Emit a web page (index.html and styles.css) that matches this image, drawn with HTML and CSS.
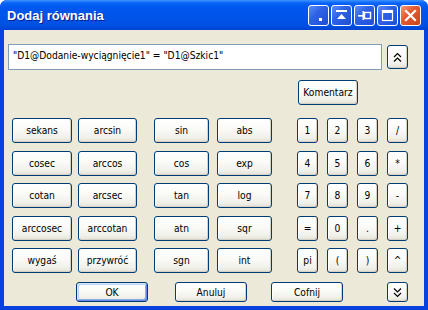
FILE: index.html
```html
<!DOCTYPE html>
<html>
<head>
<meta charset="utf-8">
<link rel="stylesheet" href="styles.css">
</head>
<body>
<div class="window">
  <div class="titlebar">
    <span class="title">Dodaj równania</span>
    <div class="tbtns">
      <div class="tbtn"><svg width="19" height="19" viewBox="0 0 19 19"><rect x="10" y="12" width="3" height="3" fill="#fff"/></svg></div>
      <div class="tbtn"><svg width="19" height="19" viewBox="0 0 19 19"><rect x="4" y="4" width="11" height="2" fill="#fff"/><polygon points="9.5,8 5,13 14,13" fill="#fff"/></svg></div>
      <div class="tbtn"><svg width="19" height="19" viewBox="0 0 19 19"><rect x="3" y="9" width="5" height="1.6" fill="#fff"/><rect x="7.5" y="5" width="1.6" height="9" fill="#fff"/><rect x="9.5" y="6.5" width="6" height="6" fill="none" stroke="#fff" stroke-width="1.4"/></svg></div>
      <div class="tbtn"><svg width="19" height="19" viewBox="0 0 19 19"><rect x="4.5" y="4.5" width="10" height="10" fill="none" stroke="#fff" stroke-width="1.2"/><rect x="4" y="4" width="11" height="3" fill="#fff"/></svg></div>
      <div class="tbtn close"><svg width="19" height="19" viewBox="0 0 19 19"><path d="M5 5 L14 14 M14 5 L5 14" stroke="#fff" stroke-width="2.2" stroke-linecap="square"/></svg></div>
    </div>
  </div>
  <div class="client">
    <div class="exprrow">
      <div class="expr">"D1@Dodanie-wyciągnięcie1" = "D1@Szkic1"</div>
      <button class="btn sq chev"><svg width="9" height="11" viewBox="0 0 9 11"><path d="M1 5 L4.5 1.5 L8 5 M1 9.5 L4.5 6 L8 9.5" fill="none" stroke="#000" stroke-width="1.2"/></svg></button>
    </div>
    <div class="komrow">
      <button class="btn kom">Komentarz</button>
    </div>
    <div class="pad">
      <div class="grp g1">
        <button class="btn">sekans</button><button class="btn">arcsin</button>
        <button class="btn">cosec</button><button class="btn">arccos</button>
        <button class="btn">cotan</button><button class="btn">arcsec</button>
        <button class="btn">arccosec</button><button class="btn">arccotan</button>
        <button class="btn">wygaś</button><button class="btn">przywróć</button>
      </div>
      <div class="grp g2">
        <button class="btn">sin</button><button class="btn">abs</button>
        <button class="btn">cos</button><button class="btn">exp</button>
        <button class="btn">tan</button><button class="btn">log</button>
        <button class="btn">atn</button><button class="btn">sqr</button>
        <button class="btn">sgn</button><button class="btn">int</button>
      </div>
      <div class="grp g3">
        <button class="btn">1</button><button class="btn">2</button><button class="btn">3</button><button class="btn">/</button>
        <button class="btn">4</button><button class="btn">5</button><button class="btn">6</button><button class="btn">*</button>
        <button class="btn">7</button><button class="btn">8</button><button class="btn">9</button><button class="btn">-</button>
        <button class="btn">=</button><button class="btn">0</button><button class="btn">.</button><button class="btn">+</button>
        <button class="btn">pi</button><button class="btn">(</button><button class="btn">)</button><button class="btn">^</button>
      </div>
    </div>
    <div class="actions">
      <button class="btn act def">OK</button>
      <button class="btn act">Anuluj</button>
      <button class="btn act">Cofnij</button>
      <button class="btn sq chev down"><svg width="9" height="11" viewBox="0 0 9 11"><path d="M1 1.5 L4.5 5 L8 1.5 M1 6 L4.5 9.5 L8 6" fill="none" stroke="#000" stroke-width="1.2"/></svg></button>
    </div>
  </div>
</div>
</body>
</html>
```

FILE: styles.css
```css
html, body {
  margin: 0;
  padding: 0;
  background: #fff;
}
.window {
  width: 428px;
  height: 310px;
  box-sizing: border-box;
  display: flex;
  flex-direction: column;
  background: #0842DE;
  border-radius: 7px 7px 0 0;
  overflow: hidden;
  font-family: "DejaVu Sans Condensed", "Liberation Sans", sans-serif;
  font-size: 10px;
  color: #000;
}
.titlebar {
  height: 30px;
  flex: none;
  display: flex;
  align-items: center;
  justify-content: space-between;
  padding: 0 7px 0 7px;
  background: linear-gradient(to bottom, #3E94FF 0, #0A64FA 3px, #0058EE 7px, #0055EA 50%, #0050E2 85%, #0043D2 100%);
}
.title {
  font-family: "Liberation Sans", sans-serif;
  font-weight: bold;
  font-size: 13px;
  color: #fff;
  text-shadow: 1px 1px 0 #0A1E8C;
  margin-top: 1px;
}
.tbtns {
  display: flex;
  gap: 2px;
  margin-top: 1px;
}
.tbtn {
  width: 21px;
  height: 21px;
  box-sizing: border-box;
  border: 1px solid #fff;
  border-radius: 3px;
  background: linear-gradient(135deg, #5A8CF6 0, #2E62E6 40%, #1E4ED8 100%);
  display: flex;
  align-items: center;
  justify-content: center;
}
.tbtn.close {
  background: linear-gradient(135deg, #F29878 0, #E35C32 40%, #CC431C 100%);
}
.client {
  flex: 1;
  margin: 0 4px 4px 4px;
  background: #ECE9D8;
  display: flex;
  flex-direction: column;
}
.exprrow {
  display: flex;
  align-items: flex-start;
  gap: 5px;
  margin: 14px 0 0 4px;
}
.expr {
  width: 374px;
  height: 26px;
  box-sizing: border-box;
  border: 1px solid #7F9DB9;
  background: #fff;
  padding: 0 0 0 4px;
  line-height: 22px;
  font-size: 10.2px;
  white-space: nowrap;
}
.btn {
  font-family: inherit;
  font-size: 10.2px;
  color: #000;
  margin: 0;
  padding: 0;
  box-sizing: border-box;
  border: 1px solid #003C74;
  border-radius: 3px;
  background: linear-gradient(to bottom, #FFFFFF 0, #FBFBF8 40%, #F1F0EA 80%, #E3E1D6 100%);
  box-shadow: inset -1px -1px 0 #D6D0C5, inset 1px 1px 0 #FFFFFF;
  display: flex;
  align-items: center;
  justify-content: center;
}
.sq {
  width: 21px;
  height: 24px;
  margin-top: 1px;
}
.komrow {
  display: flex;
  margin: 10px 0 0 294px;
}
.kom {
  width: 60px;
  height: 25px;
}
.pad {
  display: flex;
  margin: 13px 0 0 8px;
}
.grp {
  display: grid;
  grid-template-rows: repeat(5, 25px);
  row-gap: 7.5px;
}
.g1 {
  grid-template-columns: 60px 59px;
  column-gap: 6px;
}
.g2 {
  grid-template-columns: 55px 55px;
  column-gap: 8px;
  margin-left: 17px;
}
.g3 {
  grid-template-columns: repeat(4, 21px);
  column-gap: 9px;
  margin-left: 25px;
}
.g1 .btn, .g2 .btn, .g3 .btn {
  width: 100%;
  height: 25px;
}
.actions {
  display: flex;
  align-items: flex-start;
  margin: 9px 0 0 72px;
}
.act {
  width: 72px;
  height: 20px;
  margin-right: 27px;
}
.act:nth-child(2) {
  margin-right: 24px;
}
.act:nth-child(3) {
  margin-right: 44px;
}
.act.def {
  box-shadow: inset 1px 1px 0 #CEE7FF, inset -1px -1px 0 #6982EE, inset 2px 2px 0 #BCD4F6, inset -2px -2px 0 #89ADE4;
}
.chev.down {
  height: 20px;
  margin-top: 0;
}
```
